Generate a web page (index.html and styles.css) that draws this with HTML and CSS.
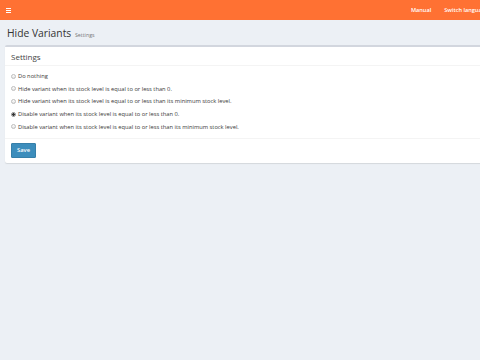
FILE: index.html
```html
<!DOCTYPE html>
<html>
<head>
<meta charset="utf-8">
<link rel="stylesheet" href="styles.css">
</head>
<body>
<header class="topbar">
  <span class="burger"><i></i><i></i><i></i></span>
  <nav class="topnav">
    <a>Manual</a>
    <a>Switch language</a>
  </nav>
</header>
<section class="content-header">
  <h1>Hide Variants <small>Settings</small></h1>
</section>
<section class="content">
  <div class="box">
    <div class="box-header">Settings</div>
    <div class="box-body">
      <label class="radio"><input type="radio" name="v"> Do nothing</label>
      <label class="radio"><input type="radio" name="v"> Hide variant when its stock level is equal to or less than 0.</label>
      <label class="radio"><input type="radio" name="v"> Hide variant when its stock level is equal to or less than its minimum stock level.</label>
      <label class="radio"><input type="radio" name="v" checked> Disable variant when its stock level is equal to or less than 0.</label>
      <label class="radio"><input type="radio" name="v"> Disable variant when its stock level is equal to or less than its minimum stock level.</label>
    </div>
    <div class="box-footer">
      <button class="btn">Save</button>
    </div>
  </div>
</section>
</body>
</html>
```
FILE: styles.css
```css
* { box-sizing: border-box; }
html, body { margin: 0; padding: 0; }
body {
  background: #ecf0f5;
  font-family: "Open Sans", "Liberation Sans", sans-serif;
  color: #333;
  width: 480px;
  height: 360px;
  overflow: hidden;
}
.topbar {
  height: 20px;
  background: #ff7133;
  display: flex;
  align-items: center;
  padding-left: 6px;
  white-space: nowrap;
  overflow: hidden;
}
.burger { display: flex; flex-direction: column; gap: 1px; width: 5px; }
.burger i { display: block; height: 1px; background: #fff; }
.topnav { display: flex; gap: 13px; margin-left: auto; margin-right: -8px; }
.topnav a { color: #fff; font-size: 5.6px; font-weight: 600; }
.content-header { padding: 6px 7px 0 7px; height: 25px; }
.content-header h1 {
  margin: 0;
  font-size: 10.3px;
  font-weight: 400;
  line-height: 14px;
  color: #333;
}
.content-header small { font-size: 5.3px; color: #777; margin-left: 1px; }
.content { padding: 0 0 0 5px; }
.box {
  background: #fff;
  border-top: 2px solid #d2d6de;
  border-radius: 2px 0 0 2px;
  box-shadow: 0 1px 1px rgba(0,0,0,0.1);
  width: 480px;
}
.box-header {
  font-size: 8px;
  color: #444;
  padding: 3px 6px 0 6px;
  height: 19px;
  line-height: 14px;
  border-bottom: 1px solid #f4f4f4;
}
.box-body { padding: 4px 6px 5px 6px; }
.radio {
  display: flex;
  align-items: center;
  height: 12.6px;
  font-size: 5.75px;
  color: #3a3a3a;
  white-space: nowrap;
}
.radio input {
  appearance: none;
  -webkit-appearance: none;
  margin: 0 2px 0 0;
  width: 5px;
  height: 5px;
  border-radius: 50%;
  border: 1px solid #bdbdbd;
  background: linear-gradient(#fff, #e4e4e4);
  flex: none;
}
.radio input:checked {
  border-color: #8c8c8c;
  background: radial-gradient(circle, #333 0, #333 1.2px, #e8e8e8 1.5px);
}
.box-footer {
  border-top: 1px solid #f4f4f4;
  padding: 4px 6px 5px 6px;
  display: flex;
}
.btn {
  background: #3c8dbc;
  border: 1px solid #367fa9;
  color: #fff;
  font-family: inherit;
  font-size: 5.8px;
  font-weight: 600;
  width: 25px;
  height: 15px;
  padding: 0;
  border-radius: 1px;
}
```
